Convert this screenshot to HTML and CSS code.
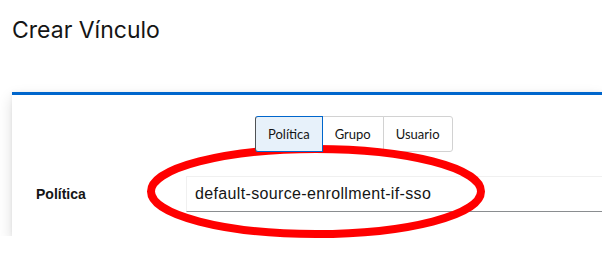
FILE: index.html
```html
<!DOCTYPE html>
<html lang="es">
<head>
    <meta charset="UTF-8">
    <meta name="viewport" content="width=device-width, initial-scale=1.0">
    <title>Crear Vínculo</title>
    <link rel="stylesheet" href="styles.css">
</head>
<body>

<h1 class="page-title">Crear Vínculo</h1>

<div class="card">
    <div class="toggle-row">
        <div class="toggle-group">
            <button class="toggle selected">Política</button>
            <button class="toggle">Grupo</button>
            <button class="toggle">Usuario</button>
        </div>
    </div>

    <div class="form-row">
        <label class="form-label" for="policy">Política</label>
        <input class="form-input" type="text" id="policy" value="default-source-enrollment-if-sso">
    </div>
</div>

<!-- highlight mark drawn over the field -->
<svg class="mark" width="602" height="256" viewBox="0 0 602 256">
    <ellipse cx="316" cy="191.5" rx="165" ry="42.5" fill="none" stroke="#ff0000" stroke-width="8"/>
</svg>

</body>
</html>
```

FILE: styles.css
```css
body {
    margin: 0;
    background-color: #fff;
    font-family: "Liberation Sans", sans-serif;
    color: #151515;
    overflow: hidden;
}

.page-title {
    margin: 0;
    padding: 16px 12px 0;
    height: 92px;
    box-sizing: border-box;
    font-family: "Inter", sans-serif;
    font-size: 23px;
    font-weight: 400;
    color: #151515;
}

.card {
    margin-left: 12px;
    width: 590px;
    background-color: #fff;
    border-top: 3px solid #06c;
    box-shadow: 0 6px 14px rgba(3, 3, 3, 0.14), 0 0 4px rgba(3, 3, 3, 0.06);
    padding: 21px 0 24px;
}

.toggle-row {
    padding-left: 243px;
}

.toggle-group {
    display: flex;
}

.toggle {
    height: 36px;
    padding: 0 12px;
    margin-right: -1px;
    background-color: #fff;
    border: 1px solid #d2d2d2;
    border-radius: 0;
    font-family: "Lato", sans-serif;
    font-size: 13px;
    color: #151515;
}

.toggle:first-child {
    border-radius: 3px 0 0 3px;
}

.toggle:last-child {
    border-radius: 0 3px 3px 0;
}

.toggle.selected {
    position: relative;
    z-index: 1;
    background-color: #e7f1fa;
    border-color: #06c;
    border-left-color: #4f5255;
}

.form-row {
    display: flex;
    align-items: center;
    margin-top: 24px;
}

.form-label {
    width: 150px;
    padding-left: 24px;
    font-size: 14px;
    font-weight: 700;
}

.form-input {
    flex: 1;
    min-width: 0;
    height: 36px;
    box-sizing: border-box;
    padding: 0 8px;
    border: 1px solid #f0f0f0;
    border-right: none;
    border-bottom-color: #8a8d90;
    font-family: "Liberation Sans", sans-serif;
    font-size: 16px;
    letter-spacing: 0.35px;
    color: #151515;
    outline: none;
}

.mark {
    position: absolute;
    left: 0;
    top: 0;
    pointer-events: none;
}
```
